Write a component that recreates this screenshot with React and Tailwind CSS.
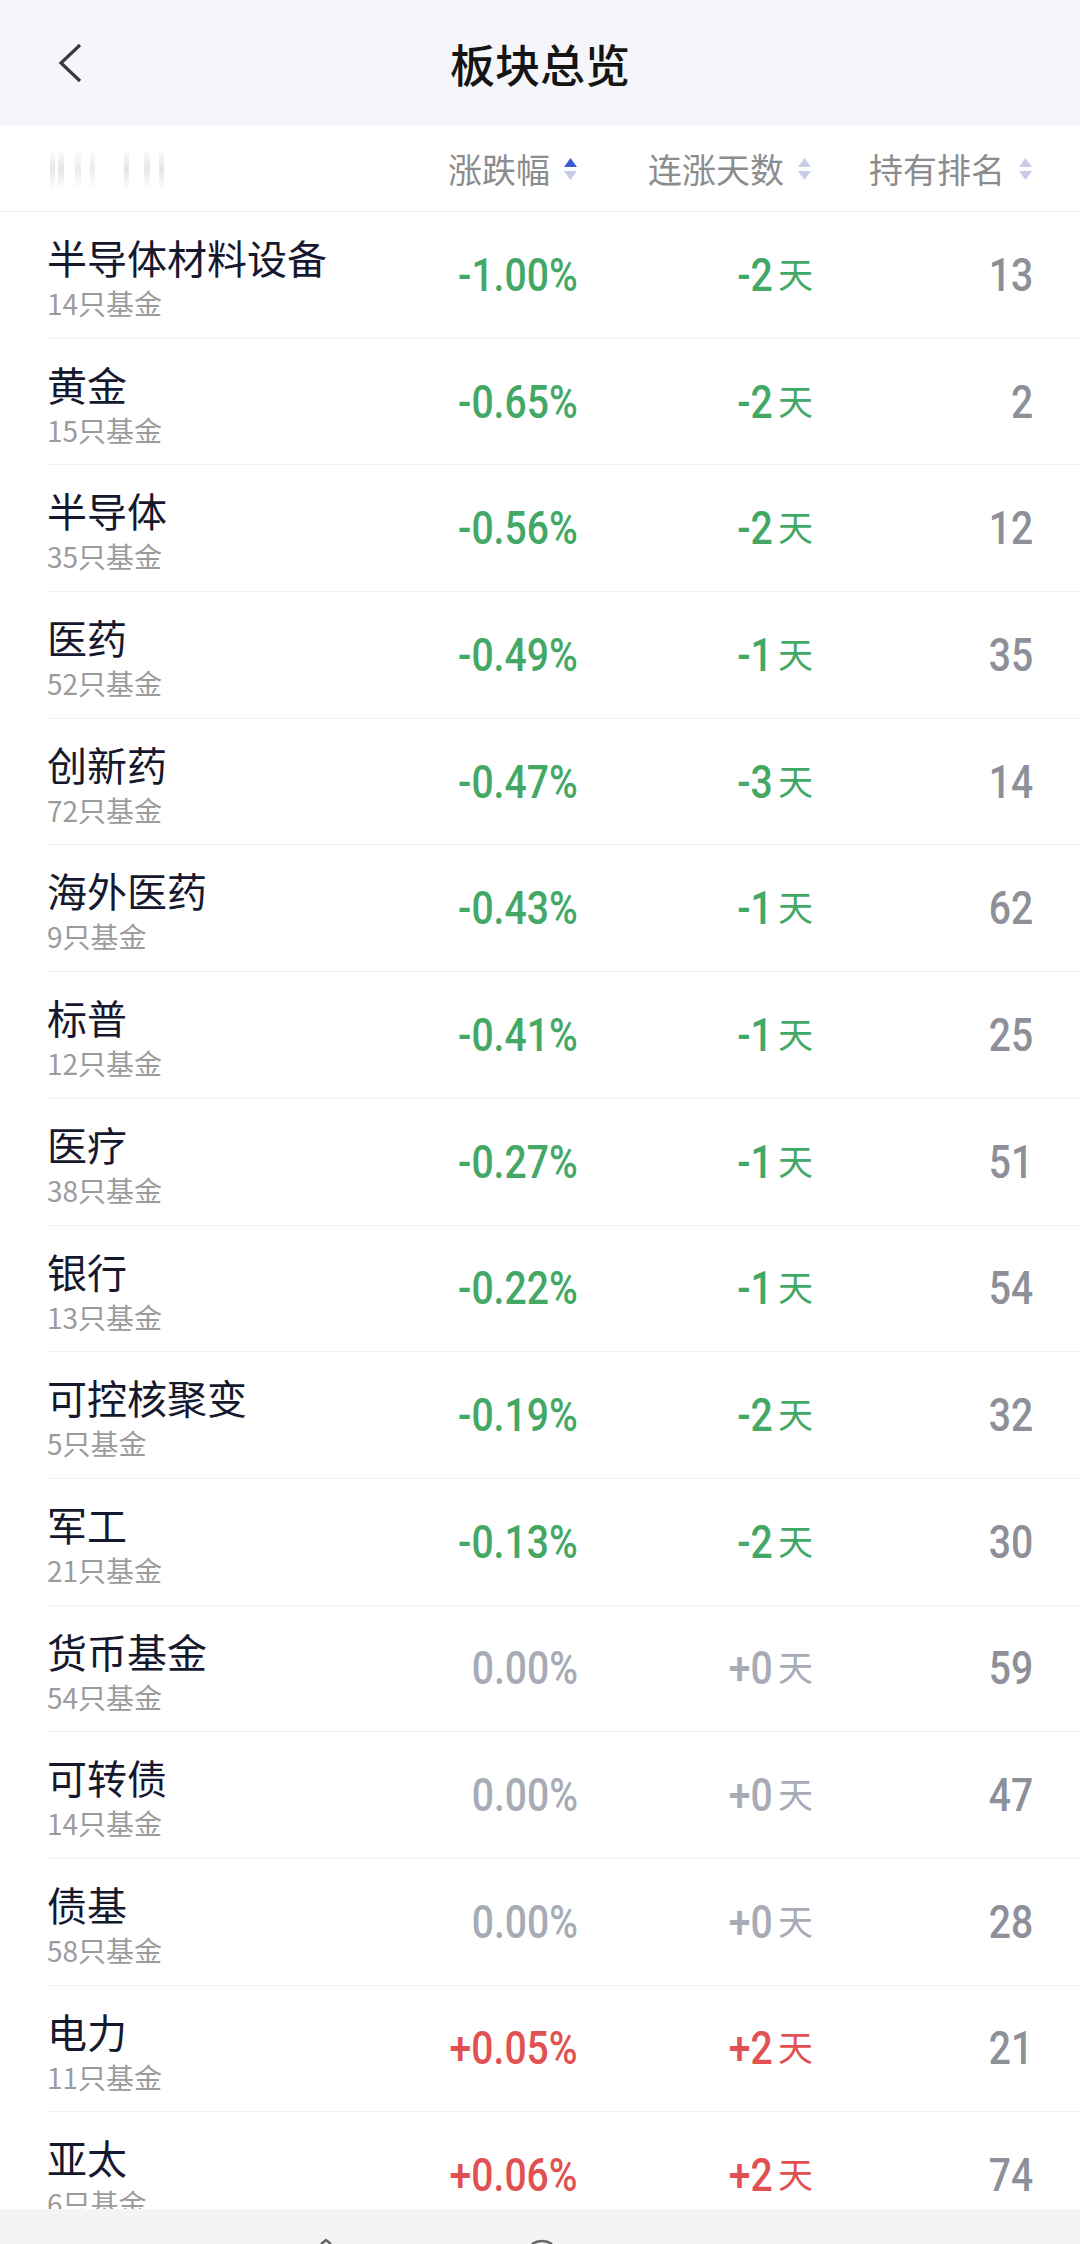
import React from 'react';

const rows = [
  { name: '半导体材料设备', count: '14只基金', pct: '-1.00%', days: '-2', rank: '13', tone: 'down' },
  { name: '黄金', count: '15只基金', pct: '-0.65%', days: '-2', rank: '2', tone: 'down' },
  { name: '半导体', count: '35只基金', pct: '-0.56%', days: '-2', rank: '12', tone: 'down' },
  { name: '医药', count: '52只基金', pct: '-0.49%', days: '-1', rank: '35', tone: 'down' },
  { name: '创新药', count: '72只基金', pct: '-0.47%', days: '-3', rank: '14', tone: 'down' },
  { name: '海外医药', count: '9只基金', pct: '-0.43%', days: '-1', rank: '62', tone: 'down' },
  { name: '标普', count: '12只基金', pct: '-0.41%', days: '-1', rank: '25', tone: 'down' },
  { name: '医疗', count: '38只基金', pct: '-0.27%', days: '-1', rank: '51', tone: 'down' },
  { name: '银行', count: '13只基金', pct: '-0.22%', days: '-1', rank: '54', tone: 'down' },
  { name: '可控核聚变', count: '5只基金', pct: '-0.19%', days: '-2', rank: '32', tone: 'down' },
  { name: '军工', count: '21只基金', pct: '-0.13%', days: '-2', rank: '30', tone: 'down' },
  { name: '货币基金', count: '54只基金', pct: '0.00%', days: '+0', rank: '59', tone: 'flat' },
  { name: '可转债', count: '14只基金', pct: '0.00%', days: '+0', rank: '47', tone: 'flat' },
  { name: '债基', count: '58只基金', pct: '0.00%', days: '+0', rank: '28', tone: 'flat' },
  { name: '电力', count: '11只基金', pct: '+0.05%', days: '+2', rank: '21', tone: 'up' },
  { name: '亚太', count: '6只基金', pct: '+0.06%', days: '+2', rank: '74', tone: 'up' },
];

const toneClass = {
  down: 'text-[#43a866]',
  flat: 'text-[#a7abb6]',
  up: 'text-[#e15151]',
};

const cjk = "font-['Noto_Sans_CJK_SC','Noto_Sans',sans-serif]";
const num = "font-['Roboto','Liberation_Sans',sans-serif]";
const digits = `${num} inline-block origin-right scale-x-[0.85] text-[46px] font-medium leading-none`;

const SortIcon = ({ active }) => (
  <svg width="15" height="26" viewBox="0 0 15 26" className="ml-[13px] shrink-0">
    <path d="M7.5 2 L14 11 L1 11 Z" fill={active ? '#3b5bd3' : '#c9cce8'} />
    <path d="M1 15 L14 15 L7.5 24 Z" fill="#c9cce8" />
  </svg>
);

const Row = ({ r }) => (
  <div className="flex h-[126.7px] shrink-0 items-center border-b border-[#f1f1f4] ml-[47px] pr-[47px]">
    <div className="flex flex-1 flex-col self-start pt-[22px]">
      <span className={`${cjk} text-[40px] leading-[46px] text-[#16182e]`}>{r.name}</span>
      <span className={`${cjk} mt-[5px] text-[28px] leading-[36px] text-[#9b9b9e]`}>{r.count}</span>
    </div>
    <div className={`w-[200px] text-right ${toneClass[r.tone]}`}>
      <span className={digits}>{r.pct}</span>
    </div>
    <div className={`flex w-[235px] items-center justify-end ${toneClass[r.tone]}`}>
      <span className={digits}>{r.days}</span>
      <span className={`${cjk} mb-[5px] ml-[5px] text-[35px] leading-none`}>天</span>
    </div>
    <div className="w-[220px] text-right text-[#8d9099]">
      <span className={digits}>{r.rank}</span>
    </div>
  </div>
);

export default function App() {
  return (
    <div className="flex h-[2244px] w-[1080px] flex-col overflow-hidden bg-white">
      {/* title bar */}
      <div className="grid h-[126px] shrink-0 grid-cols-[1fr_auto_1fr] items-center bg-[#f5f6fa]">
        <div className="pl-[56px]">
          <svg width="28" height="42" viewBox="0 0 28 42">
            <polyline points="24,3 5,21 24,39" fill="none" stroke="#3a3a3c" strokeWidth="3.2" strokeLinejoin="miter" />
          </svg>
        </div>
        <h1 className={`${cjk} text-[45px] font-medium leading-none text-[#151515]`}>板块总览</h1>
        <div />
      </div>

      {/* column headers */}
      <div className="flex h-[86px] shrink-0 items-center border-b border-[#ededf0] pr-[47px]">
        <div className="flex flex-1 items-center gap-[3px] pl-[50px] opacity-60">
          <span className="h-[40px] w-[5px] bg-gradient-to-b from-transparent via-[#d8d8dc] to-transparent" />
          <span className="h-[40px] w-[6px] bg-gradient-to-b from-transparent via-[#d2d2d6] to-transparent" />
          <span className="ml-[8px] h-[40px] w-[6px] bg-gradient-to-b from-transparent via-[#e0e0e3] to-transparent" />
          <span className="ml-[6px] h-[40px] w-[5px] bg-gradient-to-b from-transparent via-[#e0e0e3] to-transparent" />
          <span className="ml-[26px] h-[40px] w-[5px] bg-gradient-to-b from-transparent via-[#d2d2d6] to-transparent" />
          <span className="ml-[12px] h-[40px] w-[6px] bg-gradient-to-b from-transparent via-[#d8d8dc] to-transparent" />
          <span className="ml-[6px] h-[40px] w-[5px] bg-gradient-to-b from-transparent via-[#d2d2d6] to-transparent" />
        </div>
        <div className="flex w-[200px] items-center justify-end">
          <span className={`${cjk} text-[34px] leading-none text-[#8c8c8f]`}>涨跌幅</span>
          <SortIcon active />
        </div>
        <div className="flex w-[234px] items-center justify-end">
          <span className={`${cjk} text-[34px] leading-none text-[#8c8c8f]`}>连涨天数</span>
          <SortIcon />
        </div>
        <div className="flex w-[221px] items-center justify-end">
          <span className={`${cjk} text-[34px] leading-none text-[#8c8c8f]`}>持有排名</span>
          <SortIcon />
        </div>
      </div>

      {/* list */}
      <div className="flex min-h-0 flex-1 flex-col overflow-hidden">
        {rows.map((r) => (
          <Row key={r.name} r={r} />
        ))}
      </div>

      {/* bottom nav peeking */}
      <div className="h-[35px] shrink-0 bg-[#f4f4f5]">
        <svg width="1080" height="35" viewBox="0 0 1080 35">
          <path d="M321 35 L326 31 L331 35" fill="none" stroke="#666" strokeWidth="2.5" />
          <path d="M532 35 A18 18 0 0 1 552 35" fill="none" stroke="#666" strokeWidth="2.5" />
        </svg>
      </div>
    </div>
  );
}
